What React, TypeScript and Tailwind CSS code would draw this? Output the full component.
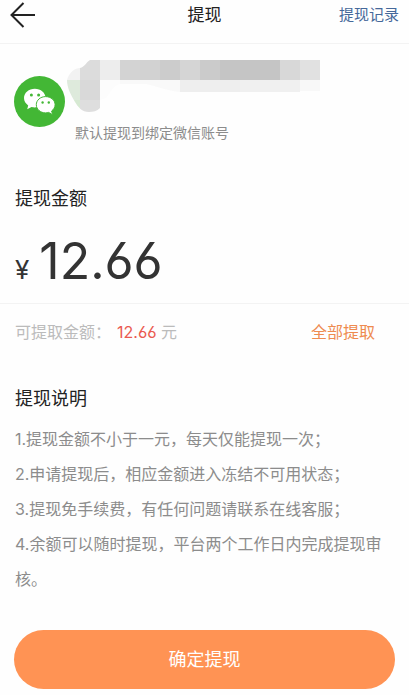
import React, { useState } from 'react';

const AVAILABLE = '12.66';

const rules = [
  '1.提现金额不小于一元，每天仅能提现一次；',
  '2.申请提现后，相应金额进入冻结不可用状态；',
  '3.提现免手续费，有任何问题请联系在线客服；',
  '4.余额可以随时提现，平台两个工作日内完成提现审核。',
];

// x, y, width, height, fill
const mosaic: [number, number, number, number, string][] = [
  [0, 0, 13, 20, '#f2f2f2'],
  [13, 0, 20, 20, '#dcdcdc'],
  [33, 0, 20, 20, '#ededed'],
  [53, 0, 20, 20, '#d3d3d3'],
  [73, 0, 20, 20, '#d2d2d2'],
  [93, 0, 20, 20, '#cccccc'],
  [113, 0, 20, 20, '#d5d5d5'],
  [133, 0, 20, 20, '#cbcbcb'],
  [153, 0, 60, 20, '#c5c5c5'],
  [213, 0, 20, 20, '#d8d8d8'],
  [233, 0, 20, 20, '#e1e1e1'],
  [0, 20, 13, 20, '#deeadc'],
  [13, 20, 20, 20, '#d9d9d9'],
  [33, 20, 20, 20, '#fcfcfc'],
  [53, 20, 60, 20, '#f9f9f9'],
  [113, 20, 60, 20, '#eeeeee'],
  [173, 20, 60, 20, '#f0f0f0'],
  [233, 20, 20, 20, '#f8f8f8'],
  [0, 40, 13, 20, '#d6e9d2'],
  [13, 40, 20, 20, '#dedede'],
];

const BackIcon = () => (
  <svg width="26" height="26" viewBox="0 0 26 26" fill="none" stroke="#222" strokeWidth="2">
    <path d="M13.5 1 1.5 13l12 12M1.5 13H25" />
  </svg>
);

const WechatIcon = () => (
  <svg className="size-[51px] shrink-0" viewBox="0 0 51 51">
    <circle cx="25.5" cy="25.5" r="25.5" fill="#43b735" />
    <path
      fill="#fff"
      d="M20.8 12.8c-6 0-10.8 4.1-10.8 9.3 0 3 1.6 5.6 4.2 7.3l-1 3.8 4.3-2.3c1.1.3 2.2.5 3.3.5 6 0 10.8-4.1 10.8-9.3s-4.8-9.3-10.8-9.3Z"
    />
    <path
      fill="#fff"
      stroke="#43b735"
      strokeWidth="1"
      d="M31.6 20.6c-5.2 0-9.3 3.6-9.3 8.1s4.1 8.2 9.3 8.2c1 0 2-.2 3-.5l4.1 2.3-1.1-3.7c2.1-1.5 3.5-3.8 3.5-6.3 0-4.5-4.3-8.1-9.5-8.1Z"
    />
    <g fill="#43b735">
      <circle cx="17.4" cy="19" r="1.5" />
      <circle cx="24.6" cy="19" r="1.5" />
      <circle cx="28.6" cy="26.5" r="1.2" />
      <circle cx="34.8" cy="26.5" r="1.2" />
    </g>
  </svg>
);

const HiddenName = () => (
  <svg width="253" height="52" viewBox="0 0 253 52" shapeRendering="crispEdges">
    <clipPath id="smear">
      <path d="M23 0H253V31H233V32H113C100 31 90 26 79 24H53C46 25 43 34 39 38L33 40V48C30 51 26 52 22 52C15 52 11 47 8 42C4 35 0 28 0 20C2 13 7 8 13 8C18 7 19 2 23 0Z" />
    </clipPath>
    <g clipPath="url(#smear)">
      {mosaic.map(([x, y, w, h, fill]) => (
        <rect key={`${x}-${y}`} x={x} y={y} width={w} height={h} fill={fill} />
      ))}
    </g>
  </svg>
);

const App: React.FC = () => {
  const [amount, setAmount] = useState(AVAILABLE);

  return (
    <div className="bg-[#fefefe] text-[#222] font-['Inter','Noto_Sans_CJK_SC',sans-serif] [font-feature-settings:'cv03']">
      <header className="grid grid-cols-[1fr_auto_1fr] items-start h-11 px-2.5 border-b border-[#f3f3f3]">
        <button type="button" aria-label="返回" className="justify-self-start pt-0.5">
          <BackIcon />
        </button>
        <h1 className="text-[17px] leading-[30px]">提现</h1>
        <a href="#records" className="justify-self-end text-[15px] leading-[30px] text-[#45689a]">
          提现记录
        </a>
      </header>

      <main className="pb-1.5">
        <section className="flex gap-0.5 px-[14px] pt-4">
          <div className="pt-4">
            <WechatIcon />
          </div>
          <div>
            <HiddenName />
            <p className="pl-2 pt-2.5 text-[14px] leading-[22px] text-[#8c8c8c]">默认提现到绑定微信账号</p>
          </div>
        </section>

        <section className="px-[15px] pt-[41px] border-b border-[#f3f3f3]">
          <label htmlFor="amount" className="block text-[18px] leading-7">
            提现金额
          </label>
          <div className="flex items-baseline gap-2.5 pt-[15px] pb-[9px] text-[#333]">
            <span className="text-[26px]">¥</span>
            <input
              id="amount"
              inputMode="decimal"
              value={amount}
              onChange={(e) => setAmount(e.target.value)}
              className="w-0 flex-1 h-[66px] text-[50px] bg-transparent outline-none"
            />
          </div>
        </section>

        <section className="flex items-center justify-between pl-[15px] pr-[34px] h-14 text-[16px] text-[#bbb]">
          <p>
            可提取金额：<span className="ml-1.5 text-[#ea5a50]">{AVAILABLE}</span> 元
          </p>
          <button type="button" onClick={() => setAmount(AVAILABLE)} className="text-[#ee8b50]">
            全部提取
          </button>
        </section>

        <section className="px-[15px] pt-[25px]">
          <h2 className="text-[18px] leading-7">提现说明</h2>
          <ul className="pt-[9px] text-[16px] leading-[35px] text-[#8c8c8c]">
            {rules.map((rule) => (
              <li key={rule}>{rule}</li>
            ))}
          </ul>
        </section>

        <div className="px-[14px] pt-[33px]">
          <button type="button" className="w-full h-[59px] rounded-full bg-[#ff9354] text-[18px] text-white">
            确定提现
          </button>
        </div>
      </main>
    </div>
  );
};

export default App;
